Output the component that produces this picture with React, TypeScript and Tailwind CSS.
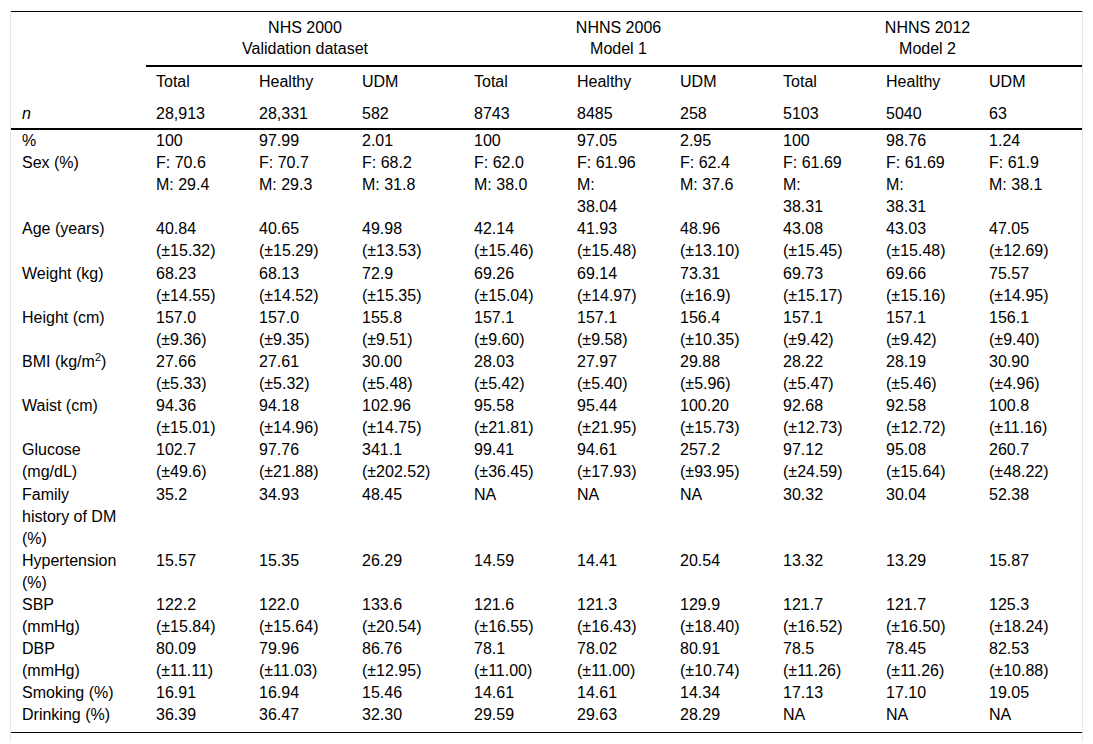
type Row = { label: React.ReactNode; cells: string[][] };

const ms = (a: string, b: string) => [a, b];

const rows: Row[] = [
  { label: "%", cells: ["100", "97.99", "2.01", "100", "97.05", "2.95", "100", "98.76", "1.24"].map((v) => [v]) },
  {
    label: "Sex (%)",
    cells: [
      ["F: 70.6", "M: 29.4"],
      ["F: 70.7", "M: 29.3"],
      ["F: 68.2", "M: 31.8"],
      ["F: 62.0", "M: 38.0"],
      ["F: 61.96", "M:", "38.04"],
      ["F: 62.4", "M: 37.6"],
      ["F: 61.69", "M:", "38.31"],
      ["F: 61.69", "M:", "38.31"],
      ["F: 61.9", "M: 38.1"],
    ],
  },
  {
    label: "Age (years)",
    cells: [
      ms("40.84", "(±15.32)"), ms("40.65", "(±15.29)"), ms("49.98", "(±13.53)"),
      ms("42.14", "(±15.46)"), ms("41.93", "(±15.48)"), ms("48.96", "(±13.10)"),
      ms("43.08", "(±15.45)"), ms("43.03", "(±15.48)"), ms("47.05", "(±12.69)"),
    ],
  },
  {
    label: "Weight (kg)",
    cells: [
      ms("68.23", "(±14.55)"), ms("68.13", "(±14.52)"), ms("72.9", "(±15.35)"),
      ms("69.26", "(±15.04)"), ms("69.14", "(±14.97)"), ms("73.31", "(±16.9)"),
      ms("69.73", "(±15.17)"), ms("69.66", "(±15.16)"), ms("75.57", "(±14.95)"),
    ],
  },
  {
    label: "Height (cm)",
    cells: [
      ms("157.0", "(±9.36)"), ms("157.0", "(±9.35)"), ms("155.8", "(±9.51)"),
      ms("157.1", "(±9.60)"), ms("157.1", "(±9.58)"), ms("156.4", "(±10.35)"),
      ms("157.1", "(±9.42)"), ms("157.1", "(±9.42)"), ms("156.1", "(±9.40)"),
    ],
  },
  {
    label: (
      <>
        BMI (kg/m<sup className="text-[11px] leading-none">2</sup>)
      </>
    ),
    cells: [
      ms("27.66", "(±5.33)"), ms("27.61", "(±5.32)"), ms("30.00", "(±5.48)"),
      ms("28.03", "(±5.42)"), ms("27.97", "(±5.40)"), ms("29.88", "(±5.96)"),
      ms("28.22", "(±5.47)"), ms("28.19", "(±5.46)"), ms("30.90", "(±4.96)"),
    ],
  },
  {
    label: "Waist (cm)",
    cells: [
      ms("94.36", "(±15.01)"), ms("94.18", "(±14.96)"), ms("102.96", "(±14.75)"),
      ms("95.58", "(±21.81)"), ms("95.44", "(±21.95)"), ms("100.20", "(±15.73)"),
      ms("92.68", "(±12.73)"), ms("92.58", "(±12.72)"), ms("100.8", "(±11.16)"),
    ],
  },
  {
    label: (
      <>
        Glucose
        <br />
        (mg/dL)
      </>
    ),
    cells: [
      ms("102.7", "(±49.6)"), ms("97.76", "(±21.88)"), ms("341.1", "(±202.52)"),
      ms("99.41", "(±36.45)"), ms("94.61", "(±17.93)"), ms("257.2", "(±93.95)"),
      ms("97.12", "(±24.59)"), ms("95.08", "(±15.64)"), ms("260.7", "(±48.22)"),
    ],
  },
  {
    label: (
      <>
        Family
        <br />
        history of DM
        <br />
        (%)
      </>
    ),
    cells: ["35.2", "34.93", "48.45", "NA", "NA", "NA", "30.32", "30.04", "52.38"].map((v) => [v]),
  },
  {
    label: (
      <>
        Hypertension
        <br />
        (%)
      </>
    ),
    cells: ["15.57", "15.35", "26.29", "14.59", "14.41", "20.54", "13.32", "13.29", "15.87"].map((v) => [v]),
  },
  {
    label: (
      <>
        SBP
        <br />
        (mmHg)
      </>
    ),
    cells: [
      ms("122.2", "(±15.84)"), ms("122.0", "(±15.64)"), ms("133.6", "(±20.54)"),
      ms("121.6", "(±16.55)"), ms("121.3", "(±16.43)"), ms("129.9", "(±18.40)"),
      ms("121.7", "(±16.52)"), ms("121.7", "(±16.50)"), ms("125.3", "(±18.24)"),
    ],
  },
  {
    label: (
      <>
        DBP
        <br />
        (mmHg)
      </>
    ),
    cells: [
      ms("80.09", "(±11.11)"), ms("79.96", "(±11.03)"), ms("86.76", "(±12.95)"),
      ms("78.1", "(±11.00)"), ms("78.02", "(±11.00)"), ms("80.91", "(±10.74)"),
      ms("78.5", "(±11.26)"), ms("78.45", "(±11.26)"), ms("82.53", "(±10.88)"),
    ],
  },
  { label: "Smoking (%)", cells: ["16.91", "16.94", "15.46", "14.61", "14.61", "14.34", "17.13", "17.10", "19.05"].map((v) => [v]) },
  { label: "Drinking (%)", cells: ["36.39", "36.47", "32.30", "29.59", "29.63", "28.29", "NA", "NA", "NA"].map((v) => [v]) },
];

const groups = [
  ["NHS 2000", "Validation dataset"],
  ["NHNS 2006", "Model 1"],
  ["NHNS 2012", "Model 2"],
];

const counts = ["28,913", "28,331", "582", "8743", "8485", "258", "5103", "5040", "63"];
const colWidths = ["w-[135px]", "w-[103px]", "w-[103px]", "w-[112px]", "w-[103px]", "w-[103px]", "w-[103px]", "w-[103px]", "w-[103px]", "w-[103px]"];

export default function App() {
  return (
    <div className="min-h-[744px] bg-white pt-[11px] font-['Liberation_Sans',Arial,sans-serif] text-[16px] text-black">
      <div className="ml-[10px] w-[1073px] border-x border-[#e6e6e6] pb-[9px]">
        <table className="w-[1071px] table-fixed border-separate border-spacing-0 border-y border-black">
          <colgroup>
            {colWidths.map((w, i) => (
              <col key={i} className={w} />
            ))}
          </colgroup>
          <thead className="leading-[22px]">
            <tr>
              <td />
              {groups.map((g) => (
                <th
                  key={g[0]}
                  colSpan={3}
                  className="border-b-2 border-black pt-[5px] pb-[6px] text-center align-top font-normal leading-[21px]"
                >
                  {g[0]}
                  <br />
                  {g[1]}
                </th>
              ))}
            </tr>
            <tr>
              <td />
              {Array.from({ length: 3 }).flatMap((_, gi) =>
                ["Total", "Healthy", "UDM"].map((h) => (
                  <th key={gi + h} className="pt-[4px] pb-[4px] pl-[10px] text-left font-normal">
                    {h}
                  </th>
                )),
              )}
            </tr>
            <tr>
              <td className="border-b-2 border-black pt-[6px] pb-[3px] pl-[11px] italic">n</td>
              {counts.map((c, i) => (
                <td key={i} className="border-b-2 border-black pt-[6px] pb-[3px] pl-[10px]">
                  {c}
                </td>
              ))}
            </tr>
          </thead>
          <tbody className="leading-[22.1px]">
            {rows.map((r, ri) => {
              const last = ri === rows.length - 1;
              return (
                <tr key={ri}>
                  <td className={`pl-[11px] align-top ${last ? "pb-[5px]" : ""}`}>{r.label}</td>
                  {r.cells.map((lines, ci) => (
                    <td key={ci} className={`pl-[10px] align-top whitespace-nowrap ${last ? "pb-[5px]" : ""}`}>
                      {lines.map((l, li) => (
                        <div key={li}>{l}</div>
                      ))}
                    </td>
                  ))}
                </tr>
              );
            })}
          </tbody>
        </table>
      </div>
    </div>
  );
}
